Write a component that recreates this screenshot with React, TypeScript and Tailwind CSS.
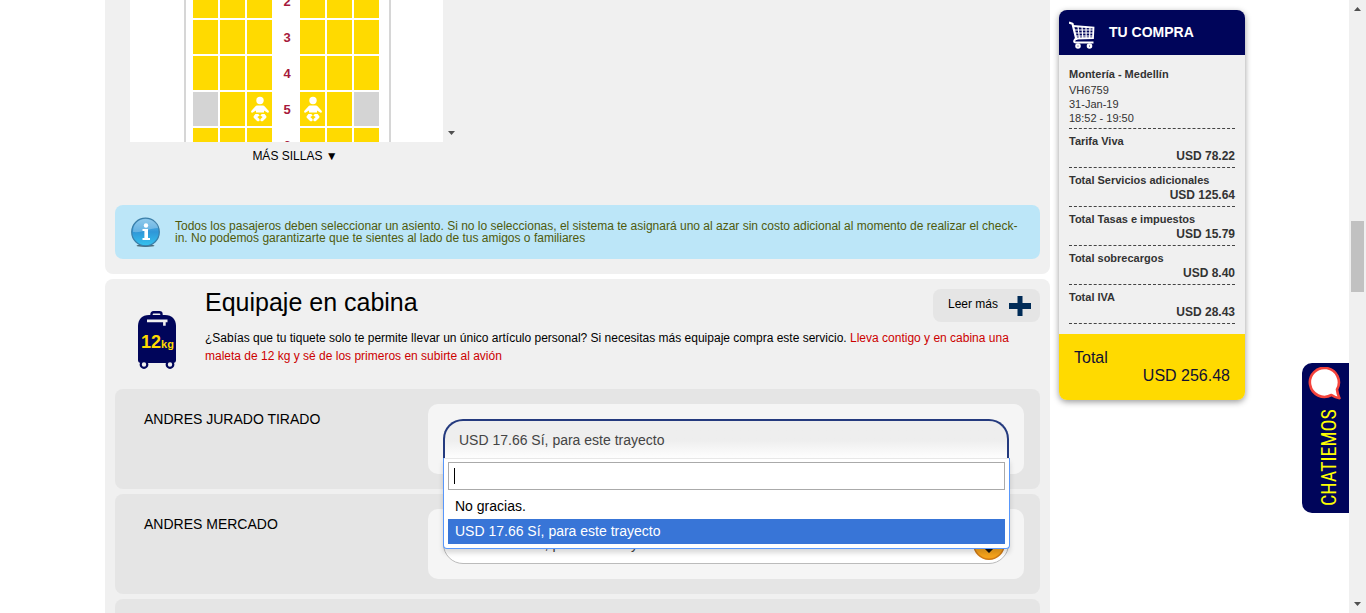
import React from "react";

const seatRows = [2, 3, 4, 5, 6];

const charges = [
  { label: "Tarifa Viva", amount: "USD 78.22" },
  { label: "Total Servicios adicionales", amount: "USD 125.64" },
  { label: "Total Tasas e impuestos", amount: "USD 15.79" },
  { label: "Total sobrecargos", amount: "USD 8.40" },
  { label: "Total IVA", amount: "USD 28.43" },
];

const YES = "USD 17.66 Sí, para este trayecto";

function BabyIcon() {
  return (
    <svg viewBox="0 0 18 26" className="h-[26px] w-[18px]" fill="#fff" aria-hidden="true">
      <circle cx="9" cy="4.500" r="3.700" />
      <path d="M6.500 9.500h5c1 0 1.600.3 2.200 1l3.900 4.200c.5.700.4 1.300-.1 1.700-.6.4-1.200.3-1.700-.2L13 14.500v2H5v-2l-2.800 1.700c-.5.5-1.100.6-1.700.2-.5-.4-.6-1-.1-1.700l3.900-4.200c.6-.7 1.200-1 2.200-1z" />
      <path d="M4.400 18h2.800l1.500 1.500-2.400 1.500 1.900 1.800c.6.800.6 1.500 0 2.100-.7.600-1.600.5-2.400-.2L3 22c-.6-.6-.6-1.300-.2-2z" />
      <path d="M13.600 18h-2.800l-1.500 1.500 2.400 1.500-1.900 1.800c-.6.800-.6 1.500 0 2.100.7.600 1.600.5 2.400-.2L15 22c.6-.6.6-1.300.2-2z" />
    </svg>
  );
}

function Seat({ row, col }: { row: number; col: number }) {
  const taken = row === 5 && (col === 0 || col === 5);
  const infant = row === 5 && (col === 2 || col === 3);
  return (
    <button
      type="button"
      aria-label={`${row}${"ABCDEF"[col]}`}
      disabled={taken}
      className={`flex h-[34px] w-[25px] items-center justify-center ${taken ? "bg-[#d4d4d4]" : "bg-[#ffda00]"}`}
    >
      {infant && <BabyIcon />}
    </button>
  );
}

function SeatMap() {
  return (
    <div className="flex h-[142px] overflow-hidden">
      <div className="flex w-[313px] justify-center bg-white pl-0.5">
        <div className="-mt-4 flex h-[200px] w-[207px] flex-col gap-[2px] border-x-2 border-[#d6d6d6] pl-[7px]">
          {seatRows.map((row) => (
            <div key={row} className="flex items-center">
              <div className="flex gap-[2px]">
                {[0, 1, 2].map((c) => (
                  <Seat key={c} row={row} col={c} />
                ))}
              </div>
              <span className="w-7 pt-0.5 pl-0.5 text-center text-[13px] font-bold text-[#a6193c]">{row}</span>
              <div className="flex gap-[2px]">
                {[3, 4, 5].map((c) => (
                  <Seat key={c} row={row} col={c} />
                ))}
              </div>
            </div>
          ))}
        </div>
      </div>
      <div className="flex w-[17px] items-end justify-center pb-[7px]">
        <svg viewBox="0 0 7 4" className="h-1 w-[7px]" fill="#505050" aria-hidden="true">
          <path d="M0 0h7L3.500 4z" />
        </svg>
      </div>
    </div>
  );
}

function InfoIcon() {
  return (
    <svg viewBox="0 0 30 30" className="h-[30px] w-[30px] shrink-0" aria-hidden="true">
      <defs>
        <linearGradient id="infoFill" x1="0" y1="0" x2="0" y2="1">
          <stop offset="0" stopColor="#6db9e6" />
          <stop offset=".5" stopColor="#2f97d8" />
          <stop offset="1" stopColor="#35c3ee" />
        </linearGradient>
      </defs>
      <ellipse cx="14.500" cy="28.700" rx="9" ry="1.200" fill="#4d6b78" />
      <circle cx="14.500" cy="15" r="13.800" fill="url(#infoFill)" stroke="#3a7ea8" strokeWidth="1.200" />
      <path d="M2 15C2 7 7.500 2 14.500 2S27 6 27 11c-8 0-15 5-25 4z" fill="#fff" opacity=".25" />
      <circle cx="15" cy="8.500" r="2.200" fill="#fff" />
      <path d="M11.500 12H17v9h2v2h-7.500v-2h1.900v-7h-1.900z" fill="#fff" />
    </svg>
  );
}

function SuitcaseIcon() {
  return (
    <svg viewBox="0 0 38 58" className="h-[58px] w-[38px]" role="img" aria-label="12kg">
      <path d="M13.500 5V3.200C13.500 2 14.200 1.300 15.500 1.300h6c1.300 0 2 .7 2 1.900V5" fill="none" stroke="#00055a" strokeWidth="2.400" />
      <path d="M11 4h16c7 0 11 4.500 11 11v34c0 2-1 3-3 3H3c-2 0-3-1-3-3V15C0 8.500 4 4 11 4z" fill="#00055a" />
      <path d="M9 8.500h20.500v2.800h-1.800v3.500h-2.600v-3.500H9z" fill="#f0f0f0" />
      <circle cx="6" cy="53.500" r="3.300" fill="#f0f0f0" stroke="#00055a" strokeWidth="2.200" />
      <circle cx="32" cy="53.500" r="3.300" fill="#f0f0f0" stroke="#00055a" strokeWidth="2.200" />
      <text x="3" y="37" fill="#ffda00" className="font-['Liberation_Sans',Arial,sans-serif] text-[18px] font-bold">
        12
        <tspan className="text-[11px]">kg</tspan>
      </text>
    </svg>
  );
}

function CartIcon() {
  return (
    <svg viewBox="0 0 26 28" className="h-7 w-[26px]" fill="none" stroke="#fff" aria-hidden="true">
      <path d="M0 1.500l3.500 1.300L7.500 19" strokeWidth="2.200" />
      <path d="M4 5l20.500 1.500L24 17 6.800 17.500" strokeWidth="1.800" />
      <path d="M5 9h19.500M5.800 12h18.500M6.500 15h17.500M9 5.500l1.500 12M13 5.500l.8 12M17 5.800l.2 11.500M21 6l-.4 11" strokeWidth="1.200" />
      <path d="M7.500 17.500C5 18.500 4 21.500 7 21.500h17.500" strokeWidth="2" />
      <circle cx="9" cy="25" r="1.700" strokeWidth="2.200" />
      <circle cx="20.500" cy="25" r="1.700" strokeWidth="2.200" />
    </svg>
  );
}

function BaggageSelect({ id }: { id: string }) {
  return (
    <div className="relative">
      <select
        id={id}
        className="block h-10 w-full appearance-none rounded-[20px] border border-[#bbb] bg-white px-[15px] text-sm text-[#444]"
      >
        <option>{YES}</option>
        <option>No gracias.</option>
      </select>
      <svg viewBox="0 0 32 32" className="pointer-events-none absolute top-1 right-1 h-8 w-8" aria-hidden="true">
        <circle cx="16" cy="16" r="15.200" fill="#f6a31c" stroke="#cf7a15" strokeWidth="1.500" />
        <path d="M14.500 8h3v12h3.500L16 25l-5-5h3.500z" fill="#111" />
      </svg>
    </div>
  );
}

function OpenBaggageSelect({ id }: { id: string }) {
  return (
    <div className="relative">
      <button
        id={id}
        type="button"
        aria-haspopup="listbox"
        aria-expanded="true"
        className="block h-10 w-full rounded-t-[20px] border-2 border-b-0 border-[#243a7e] bg-linear-to-b from-[#eee] from-20% via-[#eee] via-50% to-white px-[14px] text-left text-sm text-[#444]"
      >
        {YES}
      </button>
      <div className="absolute top-[39px] -right-px left-0 z-10 rounded-b border border-t-0 border-[#5897fb] bg-white shadow-[0_4px_5px_rgba(0,0,0,0.15)]">
        <div className="border-t border-[#e8e8e8] px-1 pt-[3px]">
          <div className="relative">
            <input
              type="text"
              aria-label="Buscar"
              className="block h-7 w-full border border-[#aaa] bg-white px-[5px] text-sm outline-none"
            />
            <span className="absolute top-1.5 left-1.5 h-4 w-px bg-black" />
          </div>
        </div>
        <ul role="listbox" className="px-1 pt-1 pb-1 text-sm leading-[25px]">
          <li role="option" aria-selected="false" className="px-[7px] text-black">
            No gracias.
          </li>
          <li role="option" aria-selected="true" className="bg-[#3875d7] px-[7px] text-white">
            {YES}
          </li>
        </ul>
      </div>
    </div>
  );
}

function PassengerRow({ name, id, open }: { name?: string; id: string; open?: boolean }) {
  return (
    <div className="flex h-[100px] shrink-0 rounded-lg bg-[#e5e5e5] py-[15px] pr-4 pl-[29px]">
      {name && (
        <>
          <label htmlFor={id} className="w-[284px] shrink-0 pt-[5px] text-sm text-black">
            {name}
          </label>
          <div className="h-[70px] flex-1 rounded-[10px] bg-[#f5f5f5] p-[15px]">
            {open ? <OpenBaggageSelect id={id} /> : <BaggageSelect id={id} />}
          </div>
        </>
      )}
    </div>
  );
}

function PurchaseSummary() {
  return (
    <aside className="mt-2.5 w-[186px] shrink-0 self-start overflow-hidden rounded-lg bg-[#f0f0f0] text-[#333] shadow-[0_2px_6px_rgba(0,0,0,0.4)]">
      <h2 className="flex h-[45px] items-center gap-3.5 bg-[#00055a] px-2.5 text-sm font-bold text-white">
        <span className="pt-1">
          <CartIcon />
        </span>
        <span className="pb-0.5">TU COMPRA</span>
      </h2>
      <div className="px-2.5 pt-3 pb-2.5">
        <div className="border-b border-dashed border-[#444] pb-[3px] text-[11px] leading-[14px]">
          <p className="pb-0.5 font-bold">Montería - Medellín</p>
          <p>VH6759</p>
          <p>31-Jan-19</p>
          <p>18:52 - 19:50</p>
        </div>
        {charges.map((c) => (
          <div key={c.label} className="border-b border-dashed border-[#444] pt-[5px] pb-[3px] font-bold">
            <p className="text-[11px] leading-[14px]">{c.label}</p>
            <p className="text-right text-xs leading-4">{c.amount}</p>
          </div>
        ))}
      </div>
      <div className="bg-[#ffda00] px-[15px] py-[15px] text-base leading-[18px] text-[#111133]">
        <p>Total</p>
        <p className="text-right">USD 256.48</p>
      </div>
    </aside>
  );
}

function PageScrollbar() {
  return (
    <div className="flex w-[17px] shrink-0 flex-col items-center bg-[#f0f0f0] py-[7px]" aria-hidden="true">
      <svg viewBox="0 0 7 4" className="h-1 w-[7px]" fill="#505050">
        <path d="M0 4h7L3.500 0z" />
      </svg>
      <div className="mt-[210px] h-[71px] w-[13px] bg-[#c1c1c1]" />
      <svg viewBox="0 0 7 4" className="mt-auto h-1 w-[7px]" fill="#505050">
        <path d="M0 0h7L3.500 4z" />
      </svg>
    </div>
  );
}

export default function App() {
  return (
    <div className="flex h-screen overflow-hidden bg-white font-['Liberation_Sans',Arial,sans-serif] text-black">
      <div className="relative flex flex-1 justify-center overflow-hidden pl-px">
        <div className="flex w-full max-w-[1140px] gap-[9px]">
          <main className="flex min-w-0 flex-1 flex-col gap-[5px]">
            <section className="h-[274px] shrink-0 rounded-b-lg bg-[#f0f0f0] px-2.5">
              <div className="pl-[15px]">
                <SeatMap />
                <div className="flex h-[63px] w-[330px] justify-center pt-[5px]">
                  <button type="button" className="h-[18px] text-xs">
                    MÁS SILLAS ▼
                  </button>
                </div>
              </div>
              <div className="flex h-[54px] items-center gap-3.5 rounded-lg bg-[#bce6f8] pr-4 pl-4">
                <InfoIcon />
                <p className="text-xs leading-3 text-[#4f5a0c]">
                  Todos los pasajeros deben seleccionar un asiento. Si no lo seleccionas, el sistema te asignará uno al
                  azar sin costo adicional al momento de realizar el check-in. No podemos garantizarte que te sientes al
                  lado de tus amigos o familiares
                </p>
              </div>
            </section>

            <section className="flex flex-1 flex-col gap-[5px] rounded-t-lg bg-[#f0f0f0] px-2.5">
              <div className="flex h-[105px] shrink-0 gap-[29px] pl-[23px]">
                <div className="pt-[32px]">
                  <SuitcaseIcon />
                </div>
                <div className="flex-1 pt-2.5">
                  <div className="flex h-10 items-start justify-between">
                    <h1 className="text-[25px] leading-[26px]">Equipaje en cabina</h1>
                    <button
                      type="button"
                      className="flex h-[33px] items-center gap-[11px] rounded-lg bg-[#e5e5e5] pr-[9px] pl-[15px] text-xs"
                    >
                      <span className="pb-1">Leer más</span>
                      <svg viewBox="0 0 22 20" className="h-5 w-[22px]" fill="#002b57" aria-hidden="true">
                        <path d="M8.500 0h5v7H22v6h-8.500v7h-5v-7H0V7h8.500z" />
                      </svg>
                    </button>
                  </div>
                  <p className="pr-6 text-xs leading-[18px]">
                    ¿Sabías que tu tiquete solo te permite llevar un único artículo personal? Si necesitas más equipaje
                    compra este servicio.{" "}
                    <span className="text-[#cc0000]">
                      Lleva contigo y en cabina una maleta de 12 kg y sé de los primeros en subirte al avión
                    </span>
                  </p>
                </div>
              </div>
              <PassengerRow id="cabina-1" name="ANDRES JURADO TIRADO" open />
              <PassengerRow id="cabina-2" name="ANDRES MERCADO" />
              <PassengerRow id="cabina-3" />
            </section>
          </main>
          <PurchaseSummary />
        </div>

        <button
          type="button"
          className="absolute top-[363px] right-0 flex h-[150px] w-[47px] flex-col items-start rounded-l-[10px] bg-[#00055a] pt-1 pl-[5px]"
        >
          <svg viewBox="0 0 34 34" className="h-[34px] w-[34px] shrink-0" aria-hidden="true">
            <path
              d="M24.500 28A14.500 14.500 0 1 1 30 22.500c.4 3.500 1.200 6 2.500 8.700-3-.4-5.500-1.400-8-3.200z"
              fill="#fff"
              stroke="#f4433c"
              strokeWidth="2.600"
              strokeLinejoin="round"
            />
          </svg>
          <span className="mt-2 ml-2 rotate-180 font-['Liberation_Sans_Narrow','Roboto_Condensed',Roboto,sans-serif] text-[20px] leading-7 text-[#ffff00] [writing-mode:vertical-rl]">
            CHATIEMOS
          </span>
        </button>
      </div>
      <PageScrollbar />
    </div>
  );
}
